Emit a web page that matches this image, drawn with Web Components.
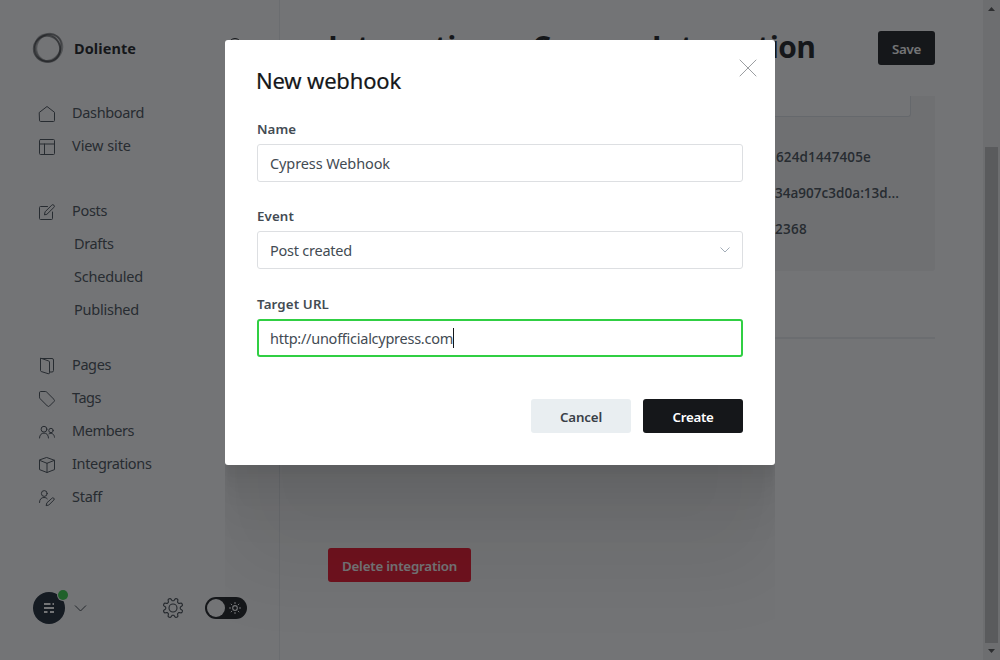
<!DOCTYPE html>
<html lang="en">
<head>
<meta charset="utf-8">
<title>New webhook</title>
<style>
html,body{margin:0;height:100%;overflow:hidden;background:#fff}
body{font-family:"Noto Sans","Open Sans",sans-serif;font-size:14px;color:#394047}
</style>
</head>
<body>
<admin-app></admin-app>
<script>
const define = (name, html, init) => customElements.define(name, class extends HTMLElement {
  connectedCallback() {
    if (this.shadowRoot) return;
    const t = document.createElement('template');
    t.innerHTML = typeof html === 'function' ? html(this) : html;
    this.attachShadow({mode: 'open'}).append(t.content.cloneNode(true));
    if (init) init(this);
  }
});

/* Inline label whose tracking is adjusted so that it occupies `w` pixels. */
define('ui-text', `<style>:host{display:inline-block;white-space:pre}span{display:inline-block}</style><span><slot></slot></span>`, el => {
  const w = parseFloat(el.getAttribute('w'));
  if (!w) return;
  const s = el.shadowRoot.querySelector('span');
  const n = el.textContent.length;
  s.style.letterSpacing = ((w - s.getBoundingClientRect().width) / n).toFixed(3) + 'px';
});

const icons = {
  home: '<path d="M.5 6.3 8 .5l7.500 5.800V14.500a1 1 0 0 1-1 1h-13a1 1 0 0 1-1-1z"/>',
  site: '<rect x=".5" y=".5" width="15" height="15" rx="1"/><path d="M.5 5h15M5.500 5v10.500"/>',
  posts: '<path d="M8.500 2.500h-7a1 1 0 0 0-1 1v11a1 1 0 0 0 1 1h11a1 1 0 0 0 1-1V8"/><path d="m5.500 10.500.6-2.700L12.700 1.200a1.500 1.500 0 0 1 2.200 2.200L8.200 10z"/>',
  pages: '<path d="M1.500.5h11.500a1.500 1.500 0 0 1 1.500 1.500v10.500a1.500 1.500 0 0 1-1.500 1.500h-2.500M1.500.5v12a1 1 0 0 0 .7 1l7 2.200a1 1 0 0 0 1.300-1V4a1 1 0 0 0-.7-1z"/>',
  tags: '<path d="M.5 1.500a1 1 0 0 1 1-1h4.800a2 2 0 0 1 1.400.6l7.300 7.300a1.500 1.500 0 0 1 0 2.100l-4.500 4.500a1.500 1.500 0 0 1-2.100 0L1.100 7.700a2 2 0 0 1-.6-1.400z"/>',
  members: '<circle cx="5" cy="5.200" r="2.900"/><path d="M.5 14c.1-3.200 2-4.900 4.500-4.900s4.400 1.700 4.500 4.900"/><circle cx="12" cy="6.500" r="2.200"/><path d="M10 9.800c2.800-1.400 5.300.3 5.500 3.400"/>',
  integrations: '<path d="M8 .6 15.500 3.300v9.300L8 15.500.5 12.600V3.300zM.5 3.300 8 6.300l7.500-3M8 6.300v9.200"/>',
  staff: '<circle cx="5.300" cy="3.500" r="2.900"/><path d="M.5 12.500c0-3.300 1.900-5 4.500-5 1.400 0 2.500.4 3.300 1.300M7.200 15.300l.7-2.500 5-4.500a1.300 1.300 0 0 1 2 1.700l-4.800 4.700z"/>',
  search: '<circle cx="7" cy="6.500" r="6"/><path d="m11.500 11 4 4"/>',
  close: '<path d="m0 0 16 16M16 0 0 16"/>'
};
define('ui-icon', el => `<style>:host{display:block;width:16px;height:16px;flex:none}svg{display:block;overflow:visible}</style>
<svg width="16" height="16" viewBox="0 0 16 16" fill="none" stroke="currentColor" stroke-width="1" stroke-linejoin="round" stroke-linecap="round">${icons[el.getAttribute('name')]}</svg>`);

define('nav-item', el => `<style>
:host{display:flex;align-items:center;height:33px;padding-left:${el.hasAttribute('sub') ? 74 : 39}px;font-size:14.500px;color:#434b53}
:host([gap]){margin-top:32px}:host([gap="22"]){margin-top:22px}
ui-icon{margin:2px 17px 0 0}::slotted(*){margin-bottom:2px}
</style>${el.hasAttribute('icon') ? `<ui-icon name="${el.getAttribute('icon')}"></ui-icon>` : ''}<slot></slot>`);

define('site-logo', `<style>:host{display:block;width:32px;height:32px}svg{display:block}</style>
<svg width="32" height="32" viewBox="0 0 32 32" fill="none" stroke="#15171a">
<ellipse cx="15" cy="16.800" rx="13.200" ry="13" stroke-width="2" stroke-opacity=".5"/>
<ellipse cx="17" cy="15" rx="12.800" ry="13.600" stroke-width="1.800" stroke-opacity=".35" transform="rotate(30 16 16)"/>
<ellipse cx="16.500" cy="15.500" rx="14.300" ry="12.400" stroke-width="1.800" stroke-opacity=".35" transform="rotate(-50 16 16)"/>
<ellipse cx="15.500" cy="16" rx="12.300" ry="14.200" stroke-width="1.500" stroke-opacity=".3" transform="rotate(-20 16 16)"/></svg>`);

define('side-footer', `<style>
:host{display:flex;align-items:center;height:40px;padding-left:33px;color:#394047}
svg{display:block;flex:none;overflow:visible}
.chev{margin-left:9.500px}.gear{margin-left:77.500px}.toggle{margin-left:22px}
</style>
<svg width="32" height="32" viewBox="0 0 32 32"><circle cx="16" cy="16" r="16" fill="#15212f"/><path d="M11 12h6.500M19.500 12H21M11 16h10M11 20h3.500M17 20h4" stroke="#fff" stroke-width="2"/><circle cx="30" cy="3" r="6" fill="#fff"/><circle cx="30" cy="3" r="5" fill="#30cf43"/></svg>
<svg class="chev" width="11" height="7" viewBox="0 0 11 7" fill="none" stroke="currentColor"><path d="m0 .5 5.500 5.500L11 .5"/></svg>
<svg class="gear" width="20" height="20" viewBox="-10 -10 20 20" fill="none" stroke="currentColor" stroke-width="1.100" stroke-linejoin="round"><circle r="4"/></svg>
<svg class="toggle" width="42" height="22" viewBox="0 0 42 22"><rect width="42" height="22" rx="11" fill="#15171a"/><circle cx="11" cy="11" r="9" fill="#fff"/><g transform="translate(30 11)" stroke="#fff" fill="none"><circle r="2.300" stroke-width="1.200"/><path d="M0-4v-2M0 4v2M-4 0h-2M4 0h2M-2.900-2.900l-1.300-1.300M2.900 2.900l1.300 1.300M-2.900 2.900l-1.300 1.300M2.900-2.900l1.300-1.300"/></g></svg>`, el => {
  let d = '';
  for (let i = 0; i <= 160; i++) {
    const a = i * Math.PI / 80, c = Math.cos(8 * a);
    const r = 8.600 + 1.400 * Math.tanh(2 * c);
    d += (i ? 'L' : 'M') + (r * Math.cos(a)).toFixed(2) + ' ' + (r * Math.sin(a)).toFixed(2);
  }
  const p = document.createElementNS('http://www.w3.org/2000/svg', 'path');
  p.setAttribute('d', d + 'Z');
  p.setAttribute('transform', 'rotate(22.500)');
  el.shadowRoot.querySelector('.gear').append(p);
});

define('app-sidebar', `<style>
:host{display:flex;flex-direction:column;box-sizing:border-box;width:280px;height:660px;border-right:1px solid #eceef0}
.brand{display:flex;align-items:center;height:32px;margin:32px 35px 48px 32px;font-size:14.500px;font-weight:700;color:#15171a}
.brand ui-text{margin-left:10px}.brand ui-icon{margin:0 0 4px auto}
side-footer{margin:auto 0 32px}
nav{margin-top:-16px}
</style>
<div class="brand"><site-logo></site-logo><ui-text w="62">Doliente</ui-text><ui-icon name="search"></ui-icon></div>
<nav>
<nav-item icon="home"><ui-text w="72">Dashboard</ui-text></nav-item>
<nav-item icon="site"><ui-text w="59">View site</ui-text></nav-item>
<nav-item icon="posts" gap><ui-text w="35">Posts</ui-text></nav-item>
<nav-item sub><ui-text w="39.500">Drafts</ui-text></nav-item>
<nav-item sub><ui-text w="69">Scheduled</ui-text></nav-item>
<nav-item sub><ui-text w="65">Published</ui-text></nav-item>
<nav-item icon="pages" gap="22"><ui-text w="39">Pages</ui-text></nav-item>
<nav-item icon="tags"><ui-text w="29">Tags</ui-text></nav-item>
<nav-item icon="members"><ui-text w="62">Members</ui-text></nav-item>
<nav-item icon="integrations"><ui-text w="79.500">Integrations</ui-text></nav-item>
<nav-item icon="staff"><ui-text w="30">Staff</ui-text></nav-item>
</nav><side-footer></side-footer>`);

define('ui-button', `<style>
:host{display:flex;align-items:center;justify-content:center;height:34px;border-radius:3px;background:#15171a;color:#fff;font-size:13.300px;font-weight:600;box-sizing:border-box;padding-top:1px}
:host([kind=red]){background:#f50b23}:host([kind=soft]){background:#e9eef1;color:#394047}
</style><slot></slot>`);

define('page-main', `<style>
:host{display:flex;flex-direction:column;width:607px;padding:0 48px;height:660px}
header{display:flex;align-items:center;justify-content:space-between;height:96px;flex:none}
h1{display:flex;align-items:center;margin:-2px 0 0;font-family:"Open Sans",sans-serif;font-size:30px;font-weight:700;color:#15171a;line-height:40px}
h1 svg{margin:0 9px 0 7px}
header ui-button{width:57px}
.card{height:175px;background:#f4f5f6;display:flex;flex-direction:column;border-radius:0 0 3px 3px;box-sizing:border-box}
.box{height:20px;margin:0 24px 0 130px;background:#fff;border:1px solid #dde1e5;border-top:0;border-radius:0 0 3px 3px}
.vals{display:grid;grid-auto-rows:36px;align-items:center;padding:22px 0 0 448px;font-family:"Open Sans",sans-serif;font-size:13.500px;font-weight:600;color:#434b53}
.vals ui-text + ui-text{margin-left:-1px}
.rule{height:2px;background:#eceef0;margin-top:66px}
.del{width:143px;margin-top:209px}
</style>
<header><h1><ui-text w="180">Integrations</ui-text><svg width="8" height="14" viewBox="0 0 8 14" fill="none" stroke="#7c8b9a" stroke-width="2"><path d="m1 1 6 6-6 6"/></svg><ui-text w="283.500">Cypress Integration</ui-text></h1><ui-button><ui-text w="29">Save</ui-text></ui-button></header>
<div class="card"><div class="box"></div><div class="vals"><ui-text w="95">624d1447405e</ui-text><ui-text w="124">34a907c3d0a:13d...</ui-text><ui-text w="32">2368</ui-text></div></div>
<div class="rule"></div>
<ui-button class="del" kind="red"><ui-text w="115">Delete integration</ui-text></ui-button>`);

define('scroll-rail', `<style>
:host{display:flex;flex-direction:column;box-sizing:border-box;width:17px;height:660px;background:#f1f1f1;align-items:center}
i{display:block;width:13px;height:496px;background:#c1c1c1;margin-top:136px}
svg{display:block}
</style><svg width="17" height="11"><path d="M5 11h7l-3.500-4z" fill="#505050"/></svg><i></i><svg width="17" height="17"><path d="M5 6h7l-3.500 4z" fill="#505050"/></svg>`);

define('form-field', el => `<style>
:host{display:block;margin-bottom:24px}
label{display:block;height:20px;line-height:20px;font-size:13.300px;font-weight:600;color:#434b53;margin-bottom:5px}
.in{display:flex;align-items:center;box-sizing:border-box;height:38px;border:1px solid #dddfe2;border-radius:3px;padding:0 12px;font-size:14.500px;color:#434b53}
.in ::slotted(*),.in slot::slotted(*){margin-bottom:1px}
:host([focus]) .in{border:2px solid #30cf43;padding:0 11px}
.chev{margin-left:auto}
.caret{width:1px;height:20px;background:#15171a}
</style><label><slot name="label"></slot></label><div class="in"><slot></slot>${el.hasAttribute('focus') ? '<span class="caret"></span>' : ''}${el.hasAttribute('select') ? '<svg class="chev" width="10" height="6" viewBox="0 0 10 6" fill="none" stroke="#a3adb8"><path d="m.5.5 4.500 4.500L9.500.5"/></svg>' : ''}</div>`);

define('webhook-modal', `<style>
:host{display:block;box-sizing:border-box;width:550px;height:425px;padding:25px 32px 32px;background:#fff;border-radius:3px;clip-path:inset(0 0 -240px 0);
box-shadow:0 3.800px 2.200px rgba(0,0,0,.014),0 9.200px 5.300px rgba(0,0,0,.02),0 17.300px 10px rgba(0,0,0,.025),0 30.800px 17.900px rgba(0,0,0,.03),0 57.700px 33.400px rgba(0,0,0,.036),0 110px 80px rgba(0,0,0,.06)}
.top{display:flex;height:54px}
h2{margin:-1px 0 0 -1px;font-size:22px;line-height:32px;font-weight:400;color:#15171a;-webkit-text-stroke:.2px #15171a}
.top ui-icon{margin:-5px -13px 0 auto;color:#9b9ea1}
form-field[select]{margin-bottom:25px}
.btns{display:flex;justify-content:flex-end;gap:12px;margin-top:42px}
.btns ui-button{width:100px}
</style>
<div class="top"><h2><ui-text w="145">New webhook</ui-text></h2><ui-icon name="close"></ui-icon></div>
<form-field><ui-text slot="label" w="39">Name</ui-text><ui-text w="120">Cypress Webhook</ui-text></form-field>
<form-field select><ui-text slot="label" w="37">Event</ui-text><ui-text w="82">Post created</ui-text></form-field>
<form-field focus><ui-text slot="label" w="72">Target URL</ui-text><ui-text w="183">http://unofficialcypress.com</ui-text></form-field>
<div class="btns"><ui-button kind="soft"><ui-text w="42">Cancel</ui-text></ui-button><ui-button><ui-text w="41">Create</ui-text></ui-button></div>`);

define('admin-app', `<style>
:host{display:flex;position:relative;width:1000px;height:660px;overflow:hidden;background:#fff}
.veil{position:absolute;inset:0;display:flex;justify-content:center;align-items:flex-start;padding-top:40px;background:rgba(21,23,26,.6)}
</style><app-sidebar></app-sidebar><page-main></page-main><scroll-rail></scroll-rail>
<div class="veil"><webhook-modal></webhook-modal></div>`);
</script>
</body>
</html>
